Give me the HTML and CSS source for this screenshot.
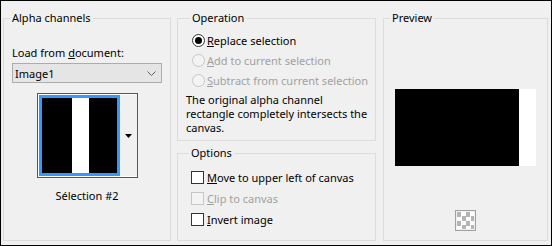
FILE: index.html
```html
<!DOCTYPE html>
<html lang="en">

<head>
    <meta charset="UTF-8">
    <title>Alpha channels</title>
    <link rel="stylesheet" href="styles.css">
</head>

<body>

    <div class="window">
        <fieldset class="group group-alpha">
            <legend>Alpha channels</legend>
            <div class="field-label">Load from <u>d</u>ocument:</div>
            <div class="select">
                <span>Image1</span>
                <svg width="9" height="5" viewBox="0 0 9 5"><path d="M0.5 0.5 L4.5 4.5 L8.5 0.5" fill="none" stroke="#606060" stroke-width="1"/></svg>
            </div>
            <div class="thumb-frame">
                <div class="thumb"><div class="thumb-img"></div></div>
                <div class="thumb-button">
                    <svg width="7" height="4" viewBox="0 0 7 4"><path d="M0 0 H7 L3.5 4 Z" fill="#000"/></svg>
                </div>
            </div>
            <div class="thumb-caption">Sélection #2</div>
        </fieldset>

        <div class="column">
            <fieldset class="group group-operation">
                <legend>Operation</legend>
                <div class="radio-row">
                    <span class="radio checked"></span>
                    <span><u>R</u>eplace selection</span>
                </div>
                <div class="radio-row disabled">
                    <span class="radio"></span>
                    <span><u>A</u>dd to current selection</span>
                </div>
                <div class="radio-row disabled">
                    <span class="radio"></span>
                    <span><u>S</u>ubtract from current selection</span>
                </div>
                <p class="note">The original alpha channel<br>rectangle completely intersects the<br>canvas.</p>
            </fieldset>

            <fieldset class="group group-options">
                <legend>Options</legend>
                <div class="check-row">
                    <span class="check"></span>
                    <span><u>M</u>ove to upper left of canvas</span>
                </div>
                <div class="check-row disabled">
                    <span class="check"></span>
                    <span><u>C</u>lip to canvas</span>
                </div>
                <div class="check-row">
                    <span class="check"></span>
                    <span><u>I</u>nvert image</span>
                </div>
            </fieldset>
        </div>

        <fieldset class="group group-preview">
            <legend>Preview</legend>
            <div class="preview-img"></div>
            <div class="checker"></div>
        </fieldset>
    </div>

</body>

</html>
```

FILE: styles.css
```css
body, html {
    margin: 0;
    padding: 0;
    background-color: #f0f0f0;
    font-family: 'Noto Sans', sans-serif;
    font-size: 11px;
    color: #000;
}

.window {
    width: 552px;
    height: 246px;
    box-sizing: border-box;
    border: 1px solid #000;
    background-color: #f0f0f0;
    padding: 9px 3px 4px 2px;
    display: flex;
    gap: 6px;
}

.group {
    margin: 0;
    padding: 0 8px;
    min-width: 0;
    box-sizing: border-box;
    border: 1px solid #dcdcdc;
    display: flex;
    flex-direction: column;
}

.group legend {
    padding: 0 2px;
    margin-left: -2px;
    line-height: 16px;
}

u {
    text-decoration: underline;
    text-underline-offset: 1px;
}

/* alpha channels */

.group-alpha {
    width: 168px;
    padding-top: 19px;
}

.field-label {
    line-height: 16px;
}

.select {
    margin-top: 2px;
    height: 20px;
    box-sizing: border-box;
    border: 1px solid #acacac;
    background-color: #e5e5e5;
    display: flex;
    align-items: center;
    justify-content: space-between;
    padding: 0 5px 0 2px;
}

.thumb-frame {
    margin-top: 10px;
    align-self: center;
    width: 101px;
    height: 85px;
    box-sizing: border-box;
    border: 1px solid #555;
    background-color: #fff;
    padding: 1px 0 1px 1px;
    display: flex;
}

.thumb {
    width: 81px;
    height: 81px;
    box-sizing: border-box;
    border: 3px solid #3399ff;
}

.thumb-img {
    width: 75px;
    height: 75px;
    background: linear-gradient(to right, #000 0, #000 30px, #fff 30px, #fff 47px, #000 47px);
}

.thumb-button {
    flex: 1;
    background-color: #f0f0f0;
    display: flex;
    align-items: center;
    justify-content: center;
}

.thumb-caption {
    margin-top: 10px;
    text-align: center;
    line-height: 16px;
}

/* middle column */

.column {
    width: 199px;
    display: flex;
    flex-direction: column;
    gap: 4px;
}

.group-operation {
    height: 131px;
    padding-top: 4px;
    padding-left: 14px;
    padding-right: 2px;
}

.radio-row, .check-row {
    display: flex;
    align-items: center;
    gap: 2px;
    height: 20px;
    white-space: nowrap;
}

.check-row {
    height: 21px;
    gap: 3px;
}

.disabled {
    color: #a0a0a0;
}

.radio {
    width: 13px;
    height: 13px;
    box-sizing: border-box;
    border: 1px solid #333;
    border-radius: 50%;
    background-color: #fff;
    display: flex;
    align-items: center;
    justify-content: center;
}

.radio.checked::after {
    content: "";
    width: 7px;
    height: 7px;
    border-radius: 50%;
    background-color: #000;
}

.disabled .radio, .disabled .check {
    border-color: #c6c6c6;
    background-color: #f3f3f3;
}

.note {
    margin: 3px 0 0 -6px;
    line-height: 14px;
    white-space: nowrap;
}

.group-options {
    height: 96px;
    padding-top: 6px;
    padding-left: 13px;
    padding-right: 2px;
}

.check {
    width: 13px;
    height: 13px;
    box-sizing: border-box;
    border: 1px solid #333;
    background-color: #fff;
}

/* preview */

.group-preview {
    width: 165px;
    margin-left: 1px;
    align-items: center;
}

.preview-img {
    margin-top: 63px;
    width: 141px;
    height: 77px;
    background: linear-gradient(to right, #000 0, #000 124px, #fff 124px);
}

.checker {
    margin-top: 44px;
    width: 21px;
    height: 21px;
    box-sizing: border-box;
    border: 1px solid #a0a0a0;
    padding: 1px;
    background-color: #fff;
    background-image: conic-gradient(#fff 25%, #b4b4b4 0 50%, #fff 0 75%, #b4b4b4 0);
    background-size: 9px 9px;
    background-position: 1px 1px;
    background-clip: content-box;
}
```
